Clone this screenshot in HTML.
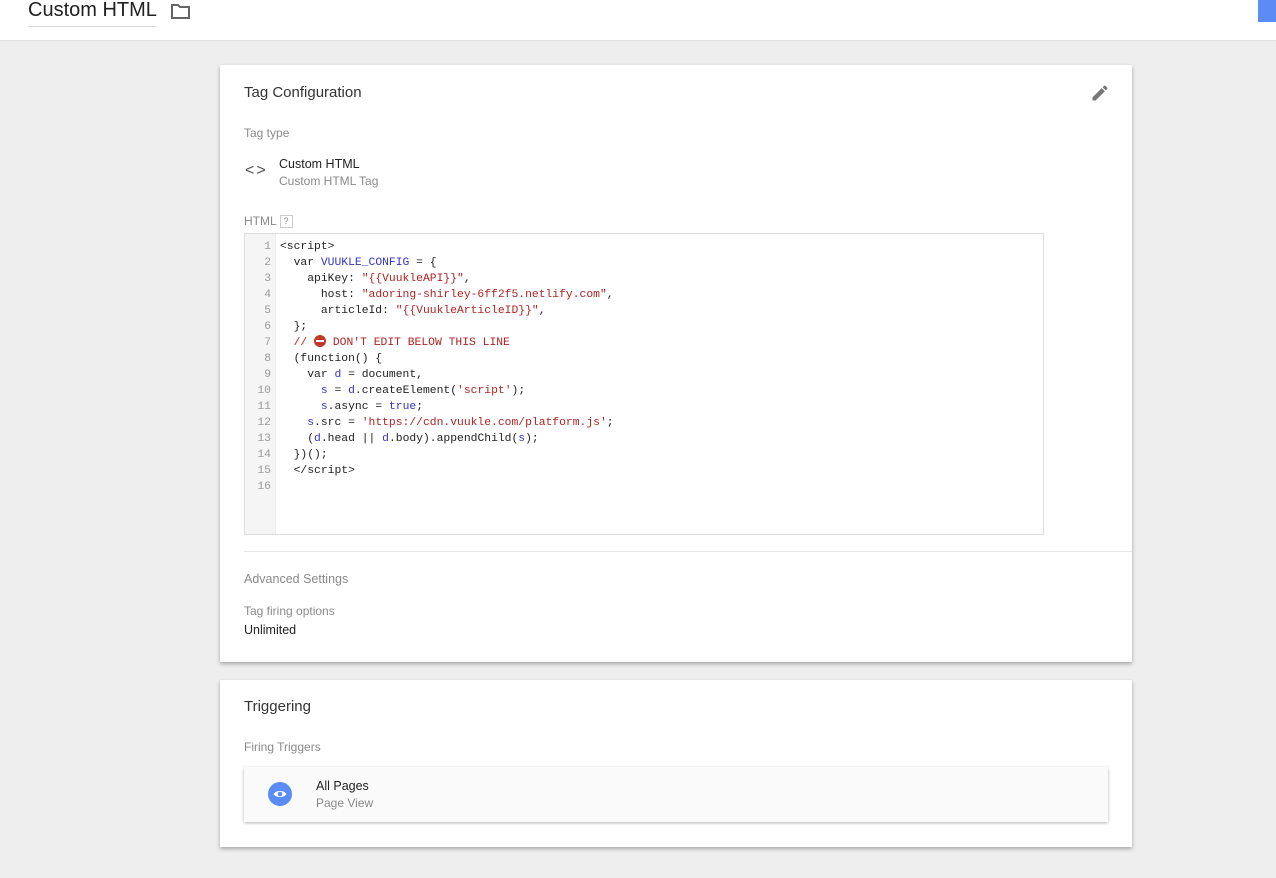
<!DOCTYPE html>
<html><head><meta charset="utf-8"><style>
body{margin:0;width:1276px;height:878px;background:#eeeeee;font-family:"Liberation Sans",Arial,sans-serif;position:relative;overflow:hidden;color:#212121}
.hdr{position:absolute;left:0;top:0;width:1276px;height:40px;background:#fff;border-bottom:1px solid #e0e0e0}
.title{position:absolute;left:28px;top:-2px;font-size:20px;color:#212121;border-bottom:1px solid #ddd;padding-bottom:4px;width:129px;white-space:nowrap;line-height:24px}
.btn{position:absolute;left:1258px;top:0;width:18px;height:22px;background:#5b8cf5}
.card{position:absolute;left:220px;width:912px;background:#fff;box-shadow:0 2px 4px rgba(0,0,0,.3)}
.abs{position:absolute;white-space:nowrap}
.lbl{font-size:12px;color:#8a8a8a}
.code{position:absolute;left:244px;top:233px;width:798px;height:300px;border:1px solid #ddd;background:#fff}
.gut{position:absolute;left:0;top:0;width:30px;height:300px;background:#f5f5f5;border-right:1px solid #eee}
pre{margin:0;font-family:"Liberation Mono",monospace;font-size:11.35px;line-height:16px;position:absolute;top:5px}
.ln{left:0;width:26px;text-align:right;color:#999}
.src{left:35px;color:#222}
.k{color:#3333cc}.s{color:#b22222}.c{color:#b22222}
</style></head><body>
<div class="hdr"><div class="title">Custom HTML</div>
<svg class="abs" style="left:170px;top:2px" width="22" height="18" viewBox="0 0 22 18"><path d="M2 3h6l2 2h9v11H2z" fill="none" stroke="#666" stroke-width="2"/></svg>
<div class="btn"></div></div>

<div class="card" style="top:65px;height:597px">
<div class="abs" style="left:24px;top:19px;font-size:15px;color:#333">Tag Configuration</div>
<svg class="abs" style="left:870px;top:18px" width="20" height="20" viewBox="0 0 24 24"><path d="M3 17.25V21h3.75L17.81 9.94l-3.75-3.75L3 17.25zM20.71 7.04a1 1 0 000-1.41l-2.34-2.34a1 1 0 00-1.41 0l-1.83 1.83 3.75 3.75 1.83-1.83z" fill="#777"/></svg>
<div class="abs lbl" style="left:24px;top:61px">Tag type</div>
<div class="abs" style="left:25px;top:97px;font-size:16px;color:#555;letter-spacing:2px">&lt;&gt;</div>
<div class="abs" style="left:59px;top:92px;font-size:12.5px;color:#222">Custom HTML</div>
<div class="abs lbl" style="left:59px;top:109px">Custom HTML Tag</div>
<div class="abs lbl" style="left:24px;top:149px">HTML <span style="display:inline-block;width:11px;height:11px;border:1px solid #ccc;font-size:9px;text-align:center;line-height:11px;vertical-align:middle">?</span></div>
<div class="abs" style="left:24px;top:486px;width:888px;border-top:1px solid #e6e6e6"></div>
<div class="abs lbl" style="left:24px;top:507px;font-size:12.5px">Advanced Settings</div>
<div class="abs lbl" style="left:24px;top:539px">Tag firing options</div>
<div class="abs" style="left:24px;top:558px;font-size:12.5px;color:#222">Unlimited</div>
</div>
<div class="code"><div class="gut"></div>
<pre class="ln">1
2
3
4
5
6
7
8
9
10
11
12
13
14
15
16</pre>
<pre class="src">&lt;script&gt;
  var <span class="k">VUUKLE_CONFIG</span> = {
    apiKey: <span class="s">"{{VuukleAPI}}"</span>,
      host: <span class="s">"adoring-shirley-6ff2f5.netlify.com"</span>,
      articleId: <span class="s">"{{VuukleArticleID}}"</span>,
  };
  <span class="c">// <span style="display:inline-block;width:12px;height:12px;border-radius:50%;background:#c0392b;vertical-align:-2px;position:relative"><span style="position:absolute;left:2px;top:5px;width:8px;height:2px;background:#fff"></span></span> DON'T EDIT BELOW THIS LINE</span>
  (function() {
    var <span class="k">d</span> = document,
      <span class="k">s</span> = <span class="k">d</span>.createElement(<span class="s">'script'</span>);
      <span class="k">s</span>.async = <span class="k">true</span>;
    <span class="k">s</span>.src = <span class="s">'https://cdn.vuukle.com/platform.js'</span>;
    (<span class="k">d</span>.head || <span class="k">d</span>.body).appendChild(<span class="k">s</span>);
  })();
  &lt;/script&gt;
</pre></div>

<div class="card" style="top:680px;height:167px">
<div class="abs" style="left:24px;top:18px;font-size:15px;color:#333">Triggering</div>
<div class="abs lbl" style="left:24px;top:60px">Firing Triggers</div>
<div class="abs" style="left:24px;top:87px;width:864px;height:55px;background:#fafafa;box-shadow:0 1px 3px rgba(0,0,0,.3)">
<svg class="abs" style="left:24px;top:15px" width="24" height="24" viewBox="0 0 24 24"><circle cx="12" cy="12" r="12" fill="#5b8cf5"/><path d="M5.5 12c2.5-4 10.5-4 13 0c-2.5 4-10.5 4-13 0z" fill="#fff"/><circle cx="12" cy="12" r="2.3" fill="#5b8cf5"/></svg>
<div class="abs" style="left:72px;top:12px;font-size:12.5px;color:#222">All Pages</div>
<div class="abs lbl" style="left:72px;top:29px">Page View</div>
</div></div>
</body></html>
